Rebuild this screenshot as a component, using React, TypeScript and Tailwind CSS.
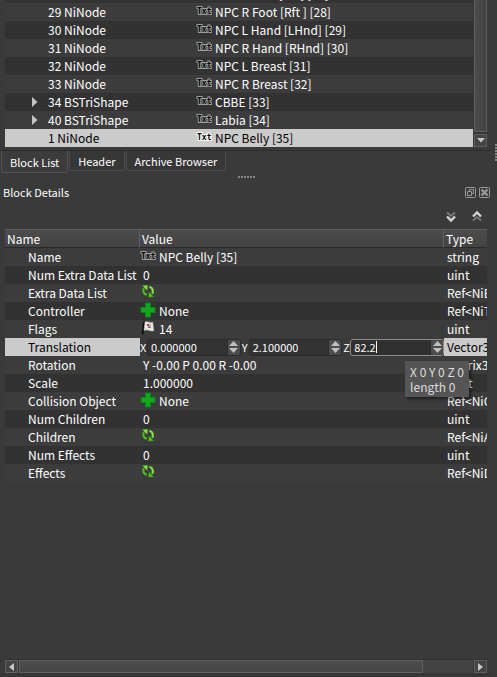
import { useState } from 'react';
import type { ReactNode } from 'react';
import { clsx } from 'clsx';

type IconName = 'txt' | 'refresh' | 'plus' | 'flag';

const BLOCKS = [
  { id: '29 NiNode', name: 'NPC R Foot [Rft ] [28]' },
  { id: '30 NiNode', name: 'NPC L Hand [LHnd] [29]' },
  { id: '31 NiNode', name: 'NPC R Hand [RHnd] [30]' },
  { id: '32 NiNode', name: 'NPC L Breast [31]' },
  { id: '33 NiNode', name: 'NPC R Breast [32]' },
  { id: '34 BSTriShape', name: 'CBBE [33]', branch: true },
  { id: '40 BSTriShape', name: 'Labia [34]', branch: true },
  { id: '1 NiNode', name: 'NPC Belly [35]' },
];

const DETAILS: { name: string; type: string; value?: string; icon?: IconName }[] = [
  { name: 'Name', icon: 'txt', value: 'NPC Belly [35]', type: 'string' },
  { name: 'Num Extra Data List', value: '0', type: 'uint' },
  { name: 'Extra Data List', icon: 'refresh', type: 'Ref<NiExtraData>' },
  { name: 'Controller', icon: 'plus', value: 'None', type: 'Ref<NiTimeController>' },
  { name: 'Flags', icon: 'flag', value: '14', type: 'uint' },
  { name: 'Translation', type: 'Vector3' },
  { name: 'Rotation', value: 'Y -0.00 P 0.00 R -0.00', type: 'Matrix33' },
  { name: 'Scale', value: '1.000000', type: 'float' },
  { name: 'Collision Object', icon: 'plus', value: 'None', type: 'Ref<NiCollisionObject>' },
  { name: 'Num Children', value: '0', type: 'uint' },
  { name: 'Children', icon: 'refresh', type: 'Ref<NiAVObject>' },
  { name: 'Num Effects', value: '0', type: 'uint' },
  { name: 'Effects', icon: 'refresh', type: 'Ref<NiDynamicEffect>' },
];

function TxtIcon({ bright }: { bright?: boolean }) {
  return (
    <svg width="16" height="16" viewBox="0 0 16 16" className="shrink-0 self-start" aria-hidden="true">
      <text
        x="1"
        y="11"
        fontFamily="DejaVu Sans Mono, monospace"
        fontWeight="bold"
        fontSize="8"
        fill="#000"
        stroke={bright ? '#fff' : '#a0a0a0'}
        strokeWidth="1.800"
        paintOrder="stroke"
      >
        Txt
      </text>
    </svg>
  );
}

function RefreshIcon() {
  return (
    <svg width="16" height="16" viewBox="0 0 16 16" className="shrink-0 self-start" aria-hidden="true">
      <g fill="none" strokeWidth="2.200">
        <path d="M6.800 10.800C3.300 9.800 2.500 6.800 4 4.200" stroke="#4fb81f" />
        <path d="M9.400 2.800C12.800 3.800 13.600 7.200 12.200 9.800" stroke="#7be33c" />
      </g>
      <path d="M2.400 1.800 7.800 1.200 7.200 6.600z" fill="#84ec45" stroke="#2f7d16" strokeWidth="0.400" />
      <path d="M13.800 12.700 8.400 13.300 9 7.900z" fill="#4fc01c" stroke="#2f7d16" strokeWidth="0.400" />
    </svg>
  );
}

function PlusIcon() {
  return (
    <svg width="16" height="16" viewBox="0 0 16 16" className="shrink-0 self-start" aria-hidden="true">
      <path d="M5.500 1h5v4.500h4.500v5H10.500v4.500h-5v-4.500H1v-5h4.500z" fill="#0fa81f" stroke="#0b8517" />
    </svg>
  );
}

function FlagIcon() {
  return (
    <svg width="16" height="16" viewBox="0 0 16 16" className="shrink-0 self-start" aria-hidden="true">
      <path d="M4 1.500 2.500 14.500" stroke="#0c0c0c" strokeWidth="1.800" />
      <path d="M5 2C7 0.800 9 3 12.800 2.200L13.800 10.800C10.800 11.800 8 8.800 4 10.500Z" fill="#ebe8e4" stroke="#bdbab6" strokeWidth="0.500" />
      <path d="M7 4h2v2H7z" fill="#c8402f" />
      <path d="M9 4.500h2v2H9z" fill="#e0a028" />
      <path d="M8 6.500h2.500v1.500H8z" fill="#3b64b8" />
    </svg>
  );
}

function ValueIcon({ name }: { name: IconName }) {
  if (name === 'txt') return <TxtIcon />;
  if (name === 'refresh') return <RefreshIcon />;
  if (name === 'plus') return <PlusIcon />;
  return <FlagIcon />;
}

function SpinBox({ axis, initial, active }: { axis: string; initial: string; active?: boolean }) {
  const [value, setValue] = useState(initial);
  const step = (delta: number) => setValue(v => (parseFloat(v || '0') + delta).toFixed(6));

  return (
    <div className="flex h-[18px] min-w-0 flex-1 items-center">
      <label htmlFor={`axis-${axis}`} className="w-[7px] shrink-0 text-[11px]">{axis}</label>
      <div
        className={clsx(
          'flex h-[17px] min-w-0 flex-1 overflow-hidden rounded-[3px] border',
          active ? 'border-[#8c8c8c] bg-[#303030]' : 'border-[#2a2a2a] bg-[#333]'
        )}
      >
        <div className="flex min-w-0 flex-1 items-center pl-[3px]">
          <input
            id={`axis-${axis}`}
            value={value}
            onChange={e => setValue(e.target.value)}
            className="field-sizing-content max-w-full bg-transparent text-[11px] leading-[15px] outline-none"
          />
          {active && <span className="h-[12px] w-px shrink-0 bg-white" />}
        </div>
        <div className="flex w-[13px] shrink-0 flex-col items-center justify-center gap-[2px] border-l border-[#2c2c2c] bg-[#4c4c4c]">
          <button type="button" aria-label={`Increase ${axis}`} onClick={() => step(1)}>
            <svg width="9" height="5" viewBox="0 0 9 5" className="block"><path d="M4.500 0 9 5H0z" fill="#c0c0c0" /></svg>
          </button>
          <button type="button" aria-label={`Decrease ${axis}`} onClick={() => step(-1)}>
            <svg width="9" height="5" viewBox="0 0 9 5" className="block"><path d="M4.500 5 9 0H0z" fill="#c0c0c0" /></svg>
          </button>
        </div>
      </div>
    </div>
  );
}

function ScrollButton({ label, children }: { label: string; children: ReactNode }) {
  return (
    <button
      type="button"
      aria-label={label}
      className="flex h-[13px] w-[13px] shrink-0 items-center justify-center border border-[#606060] bg-[#444]"
    >
      {children}
    </button>
  );
}

function BlockList() {
  const [selected, setSelected] = useState('1 NiNode');

  return (
    <section className="flex border-b border-[#2c2c2c] pr-[5px] pb-[3px] pl-[5px]">
      <div className="min-w-0 flex-1">
        {/* last pixels of the row that is scrolled out */}
        <div className="flex h-[3px] items-end overflow-hidden bg-[#323232] pl-[210px]">
          <span className="leading-[18px]">NPC L Foot [Lft ] [27]</span>
        </div>
        <table className="w-full table-fixed border-collapse">
          <colgroup>
            <col className="w-[191px]" />
            <col />
          </colgroup>
          <tbody>
            {BLOCKS.map(block => {
              const isSelected = block.id === selected;
              return (
                <tr
                  key={block.id}
                  onClick={() => setSelected(block.id)}
                  className={isSelected ? 'bg-[#cbcbcb] text-black' : 'odd:bg-[#3c3c3c] even:bg-[#323232]'}
                >
                  <td className="p-0">
                    <div className="flex h-[18px] items-center whitespace-nowrap">
                      <span className="flex w-[43px] shrink-0 pl-[27px]">
                        {block.branch && (
                          <svg width="6" height="10" viewBox="0 0 6 10"><path d="M0 0 5.500 5 0 10z" fill="#c4c4c4" /></svg>
                        )}
                      </span>
                      {block.id}
                    </div>
                  </td>
                  <td className="p-0">
                    <div className="flex h-[18px] items-center gap-[3px] overflow-hidden whitespace-nowrap">
                      <TxtIcon bright={isSelected} />
                      {block.name}
                    </div>
                  </td>
                </tr>
              );
            })}
          </tbody>
        </table>
      </div>
      <div className="flex w-[14px] shrink-0 flex-col items-end gap-[2px] bg-[#353535]">
        <div className="w-[13px] flex-1 border-x border-b border-[#606060] bg-linear-to-r from-[#4b4b4b] to-[#434343]" />
        <ScrollButton label="Scroll down">
          <svg width="8" height="5" viewBox="0 0 8 5"><path d="M0 0h8L4 4.500z" fill="#c8c8c8" /></svg>
        </ScrollButton>
      </div>
    </section>
  );
}

function ViewTabs() {
  const [tab, setTab] = useState('Block List');

  return (
    <nav className="flex h-[22px] items-start gap-px pl-px text-[11px]">
      {['Block List', 'Header', 'Archive Browser'].map(label => (
        <button
          key={label}
          type="button"
          onClick={() => setTab(label)}
          className={clsx(
            'rounded-b-[3px] border border-t-0 px-2',
            label === tab ? 'h-[22px] border-[#535353] bg-[#3c3c3c]' : 'h-[20px] border-[#4c4c4c] bg-[#373737]'
          )}
        >
          {label}
        </button>
      ))}
    </nav>
  );
}

function BlockDetails() {
  return (
    <section className="flex flex-1 flex-col">
      <header className="flex h-[22px] items-center justify-between pr-[2px] pl-[3px]">
        <h2 className="text-[11px]">Block Details</h2>
        <div className="flex gap-[3px]">
          <button type="button" aria-label="Float panel">
            <svg width="11" height="11" viewBox="0 0 11 11" fill="none" stroke="#989898" className="block">
              <rect x="0.500" y="0.500" width="10" height="10" rx="1" />
              <path d="M4.500 4.500v-2h4v4h-2M2.500 4.500h4v4h-4z" />
            </svg>
          </button>
          <button type="button" aria-label="Close panel">
            <svg width="11" height="11" viewBox="0 0 11 11" fill="none" stroke="#989898" className="block">
              <rect x="0.500" y="0.500" width="10" height="10" rx="1" />
              <path d="M2.500 2.500l6 6M8.500 2.500l-6 6" strokeWidth="2.400" />
            </svg>
          </button>
        </div>
      </header>

      <div className="flex h-[26px] items-center justify-end gap-4 pr-[10px]">
        <button type="button" aria-label="Expand all">
          <svg width="10" height="13" viewBox="0 0 10 13" fill="none" strokeWidth="2" className="block">
            <path d="M1 2.500 5 6 9 2.500" stroke="#777" />
            <path d="M1 6.500 5 10.500 9 6.500" stroke="#d4d4d4" strokeWidth="2.400" />
          </svg>
        </button>
        <button type="button" aria-label="Collapse all">
          <svg width="10" height="13" viewBox="0 0 10 13" fill="none" strokeWidth="2" className="block">
            <path d="M1 10.500 5 7 9 10.500" stroke="#777" />
            <path d="M1 6.500 5 2.500 9 6.500" stroke="#d4d4d4" strokeWidth="2.400" />
          </svg>
        </button>
      </div>

      <div className="flex flex-1 flex-col px-[5px]">
        <table className="w-full table-fixed border-collapse">
          <colgroup>
            <col className="w-[135px]" />
            <col />
            <col className="w-[43px]" />
          </colgroup>
          <thead>
            <tr className="bg-linear-to-b from-[#4c4c4c] to-[#434343] text-left">
              {['Name', 'Value', 'Type'].map(title => (
                <th key={title} className="group p-0 font-normal">
                  <div className="h-[19px] border-t border-r border-b border-t-[#5e5e5e] border-r-[#606060] border-b-[#2a2a2a] pl-[2px] leading-[18px] group-last:border-r-0">
                    {title}
                  </div>
                </th>
              ))}
            </tr>
          </thead>
          <tbody>
            {DETAILS.map(row => {
              const editing = row.name === 'Translation';
              const mark = editing && 'bg-[#cbcbcb] text-black';
              return (
                <tr key={row.name} className="odd:bg-[#3c3c3c] even:bg-[#323232]">
                  <td className={clsx('p-0', mark)}>
                    <div className="h-[18px] overflow-hidden pl-[23px] leading-[18px] whitespace-nowrap">{row.name}</div>
                  </td>
                  <td className="p-0">
                    {editing ? (
                      <div className="relative flex gap-px bg-[#3a3a3a]">
                        <SpinBox axis="X" initial="0.000000" />
                        <SpinBox axis="Y" initial="2.100000" />
                        <SpinBox axis="Z" initial="82.2" active />
                        <div
                          role="tooltip"
                          className="absolute top-[23px] -right-[25px] z-10 bg-[#555] px-[5px] py-[3px] leading-[15px] whitespace-nowrap text-[#ddd] shadow-[2px_2px_3px_rgba(0,0,0,0.5)]"
                        >
                          X 0 Y 0 Z 0
                          <br />
                          length 0
                        </div>
                      </div>
                    ) : (
                      <div className={clsx('flex h-[18px] items-center gap-[3px] overflow-hidden whitespace-nowrap', !row.icon && 'pl-[3px]')}>
                        {row.icon && <ValueIcon name={row.icon} />}
                        {row.value}
                      </div>
                    )}
                  </td>
                  <td className={clsx('p-0', mark)}>
                    <div className="h-[18px] overflow-hidden pl-[3px] leading-[18px] whitespace-nowrap">{row.type}</div>
                  </td>
                </tr>
              );
            })}
          </tbody>
        </table>

        <div className="mt-auto flex h-[14px] items-end gap-px border-t border-[#303030] bg-[#353535]">
          <ScrollButton label="Scroll left">
            <svg width="5" height="8" viewBox="0 0 5 8"><path d="M5 0v8L0 4z" fill="#c8c8c8" /></svg>
          </ScrollButton>
          <div className="flex h-[13px] flex-1 bg-[#434343]">
            <div className="w-[89%] border border-[#606060] bg-linear-to-b from-[#4c4c4c] to-[#454545]" />
          </div>
          <ScrollButton label="Scroll right">
            <svg width="5" height="8" viewBox="0 0 5 8"><path d="M0 0v8l5-4z" fill="#c8c8c8" /></svg>
          </ScrollButton>
        </div>
      </div>
      <div className="h-1 bg-[#363636]" />
    </section>
  );
}

export default function App() {
  return (
    <div className="flex min-h-screen bg-[#3a3a3a] font-['Noto_Sans_CJK_SC',sans-serif] text-[12px] leading-[18px] text-white">
      <main className="flex min-w-0 flex-1 flex-col">
        <BlockList />
        <ViewTabs />
        <div className="flex h-[8px] items-center justify-center gap-px">
          {[0, 1, 2, 3, 4, 5].map(dot => <span key={dot} className="h-[2px] w-[2px] bg-[#858585]" />)}
        </div>
        <BlockDetails />
      </main>
      <div className="flex w-[5px] shrink-0 flex-col items-end gap-px pt-[144px]">
        {[0, 1, 2, 3, 4, 5].map(dot => <span key={dot} className="h-[2px] w-[2px] bg-[#858585]" />)}
      </div>
    </div>
  );
}
